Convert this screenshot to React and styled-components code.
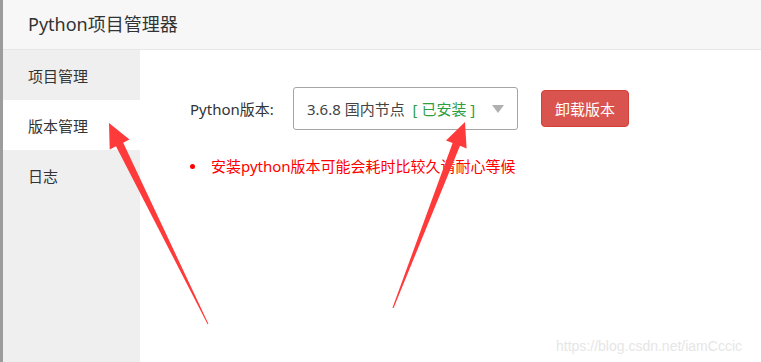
import React from 'react';
import styled, { createGlobalStyle } from 'styled-components';

const GlobalStyle = createGlobalStyle`
  html, body, #root {
    height: 100%;
  }
  body {
    margin: 0;
    background: #9c9c9c;
    font-family: "Noto Sans", "Noto Sans CJK SC", sans-serif;
    font-size: 15px;
    color: #333;
  }
`;

const versionTip = '安装python版本可能会耗时比较久请耐心等候';

export default function App() {
  return (
    <>
      <GlobalStyle />
      <Window>
        <Header>
          <Title>Python项目管理器</Title>
        </Header>
        <Body>
          <Sidebar>
            <NavItem>项目管理</NavItem>
            <NavItem active>版本管理</NavItem>
            <NavItem>日志</NavItem>
          </Sidebar>
          <Content>
            <FormRow>
              <Label>Python版本:</Label>
              <Select>
                <span>
                  3.6.8 国内节点 <Installed>[ 已安装 ]</Installed>
                </span>
                <Caret />
              </Select>
              <DangerButton>卸载版本</DangerButton>
            </FormRow>
            <Tips>
              <Tip>{versionTip}</Tip>
            </Tips>
          </Content>
        </Body>
        <Watermark>https://blog.csdn.net/iamCccic</Watermark>
        <Arrows viewBox="0 0 761 362">
          <polygon
            fill="#ff3a3a"
            points="109,123 129.5,139.6 123.2,142.7 208.4,323.8 207.6,324.2 116,146.3 109.7,149.4"
          />
          <polygon
            fill="#ff3a3a"
            points="465,122 466.6,148.4 460,145.8 393.5,308.2 392.5,307.8 452.6,143 446,140.4"
          />
        </Arrows>
      </Window>
    </>
  );
}

const Window = styled.div`
  position: relative;
  height: 100%;
  margin-left: 3px;
  display: flex;
  flex-direction: column;
  background: #fff;
  overflow: hidden;
`;

const Header = styled.div`
  height: 49px;
  flex-shrink: 0;
  display: flex;
  align-items: center;
  padding-left: 25px;
  background: #f7f7f7;
  border-bottom: 1px solid #e6e6e6;
`;

const Title = styled.div`
  font-size: 18px;
  color: #333;
  margin-top: -4px;
`;

const Body = styled.div`
  flex: 1;
  display: flex;
`;

const Sidebar = styled.div`
  width: 137px;
  background: #efefef;
  display: flex;
  flex-direction: column;
`;

const NavItem = styled.div`
  height: 50px;
  display: flex;
  align-items: center;
  padding-left: 25px;
  background: ${(p) => (p.active ? '#fff' : 'transparent')};
  color: #333;
`;

const Content = styled.div`
  flex: 1;
  padding: 37px 0 0 50px;
`;

const FormRow = styled.div`
  display: flex;
  align-items: center;
`;

const Label = styled.div`
  width: 103px;
  color: #333;
`;

const Select = styled.div`
  box-sizing: border-box;
  width: 225px;
  height: 43px;
  display: flex;
  align-items: center;
  justify-content: space-between;
  padding: 0 13px 0 13px;
  border: 1px solid #a5a5a5;
  border-radius: 3px;
  color: #444;
  white-space: pre;
`;

const Installed = styled.span`
  color: #2f9e3f;
  margin-left: 4px;
`;

const Caret = styled.span`
  width: 0;
  height: 0;
  border-left: 6px solid transparent;
  border-right: 6px solid transparent;
  border-top: 8px solid #b0b0b0;
`;

const DangerButton = styled.button`
  margin-left: 23px;
  height: 37px;
  width: 88px;
  padding: 0;
  border: 1px solid #d43f3a;
  border-radius: 4px;
  background: #d9534f;
  color: #fff;
  font-family: inherit;
  font-size: 15px;
`;

const Tips = styled.ul`
  margin: 25px 0 0;
  padding: 0;
  list-style: none;
`;

const Tip = styled.li`
  position: relative;
  padding-left: 21px;
  color: #f00;
  line-height: 22px;

  &::before {
    content: '';
    position: absolute;
    left: 0;
    top: 9px;
    width: 5px;
    height: 5px;
    border-radius: 50%;
    background: #f00;
  }
`;

const Watermark = styled.div`
  position: absolute;
  right: 19px;
  bottom: 8px;
  font-family: "Liberation Sans", Arial, sans-serif;
  font-size: 14px;
  color: #e6e6e6;
`;

const Arrows = styled.svg`
  position: absolute;
  left: -3px;
  top: 0;
  width: 761px;
  height: 362px;
  pointer-events: none;
`;
